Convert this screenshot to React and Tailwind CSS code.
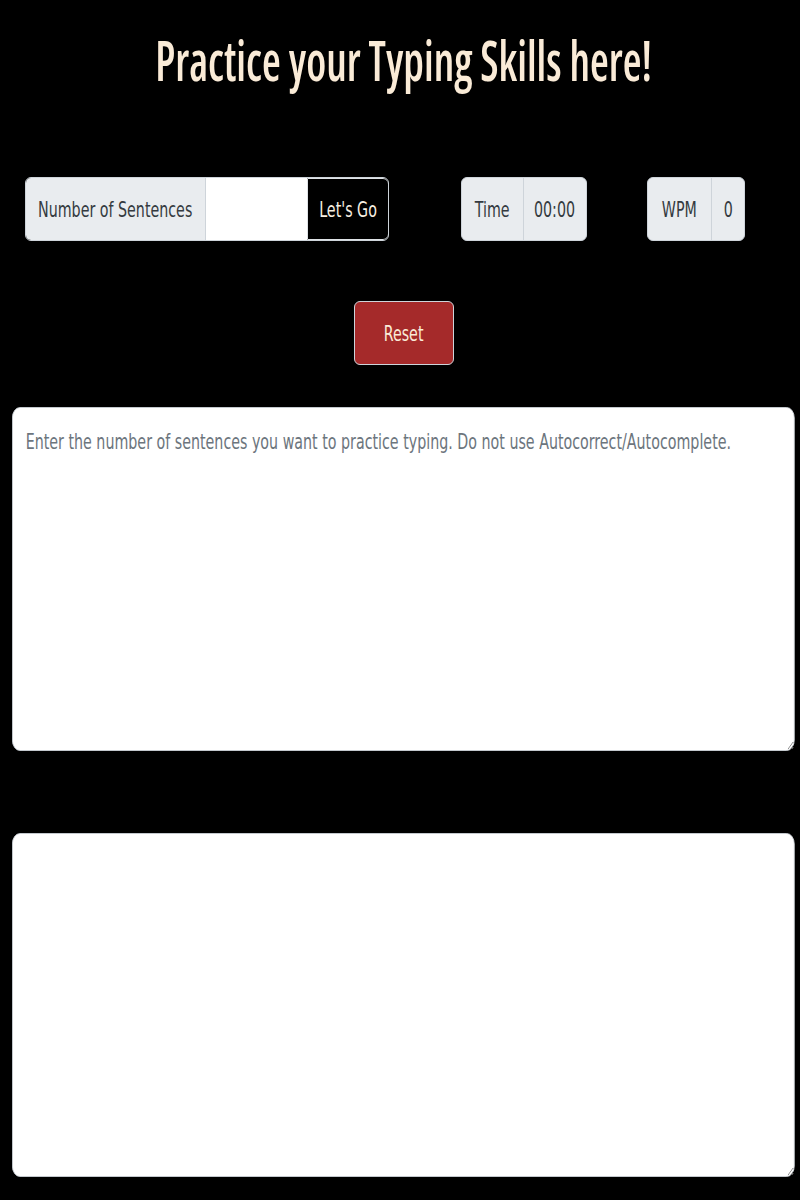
function Squeeze({ children, className = "" }) {
  return (
    <span className={"inline-block shrink-0 whitespace-nowrap scale-x-[0.72] " + className}>
      {children}
    </span>
  );
}

export default function App() {
  return (
    <div
      className="min-h-[1200px] overflow-x-hidden bg-black font-stretch-condensed"
      style={{ fontFamily: '"DejaVu Sans", "Noto Sans", sans-serif' }}
    >
      <h1
        className="flex justify-center pl-[7px] pt-[24px] text-[56px] font-semibold leading-[70px] text-[#faebd7]"
        style={{ fontFamily: '"Open Sans", "Noto Sans", sans-serif' }}
      >
        <span className="inline-block shrink-0 whitespace-nowrap scale-x-[0.77]">
          Practice your Typing Skills here!
        </span>
      </h1>

      <div className="mt-[83px] flex items-stretch pl-[25px] text-[22px]">
        <div className="flex h-[64px] w-[364px] overflow-hidden rounded-md border border-[#ced4da]">
          <span className="flex w-[180px] items-center justify-center border-r border-[#ced4da] bg-[#e9ecef] text-[#343a40]">
            <Squeeze>Number of Sentences</Squeeze>
          </span>
          <input type="text" className="w-[101px] bg-white outline-none" />
          <button className="flex flex-1 items-center justify-center rounded-r-md border border-[#dee2e6] bg-black text-[#f8f0e3]">
            <Squeeze>Let's Go</Squeeze>
          </button>
        </div>

        <div className="ml-[72px] flex h-[64px] w-[126px] overflow-hidden rounded-md border border-[#ced4da] bg-[#e9ecef] text-[#343a40]">
          <span className="flex w-[62px] items-center justify-center border-r border-[#ced4da]">
            <Squeeze>Time</Squeeze>
          </span>
          <span className="flex flex-1 items-center justify-center">
            <Squeeze>00:00</Squeeze>
          </span>
        </div>

        <div className="ml-[60px] flex h-[64px] w-[98px] overflow-hidden rounded-md border border-[#ced4da] bg-[#e9ecef] text-[#343a40]">
          <span className="flex w-[64px] items-center justify-center border-r border-[#ced4da]">
            <Squeeze>WPM</Squeeze>
          </span>
          <span className="flex flex-1 items-center justify-center">
            <Squeeze>0</Squeeze>
          </span>
        </div>
      </div>

      <div className="mt-[60px] flex justify-center pl-[7px]">
        <button className="flex h-[64px] w-[100px] items-center justify-center rounded-md border border-[#ced4da] bg-[#a52a2a] text-[22px] text-[#faebd7]">
          <Squeeze>Reset</Squeeze>
        </button>
      </div>

      <div className="mt-[42px] px-[12px]">
        <textarea
          placeholder="Enter the number of sentences you want to practice typing. Do not use Autocorrect/Autocomplete."
          className="block h-[344px] w-[1087px] origin-left scale-x-[0.72] rounded-[11px] border border-[#ced4da] bg-white px-[18px] py-[17px] text-[22px] leading-[33px] text-[#212529] outline-none placeholder:text-[#6c757d]"
        />
      </div>

      <div className="mt-[82px] px-[12px]">
        <textarea className="block h-[344px] w-[1087px] origin-left scale-x-[0.72] rounded-[11px] border border-[#ced4da] bg-white px-[18px] py-[17px] text-[22px] leading-[33px] text-[#212529] outline-none" />
      </div>
    </div>
  );
}
